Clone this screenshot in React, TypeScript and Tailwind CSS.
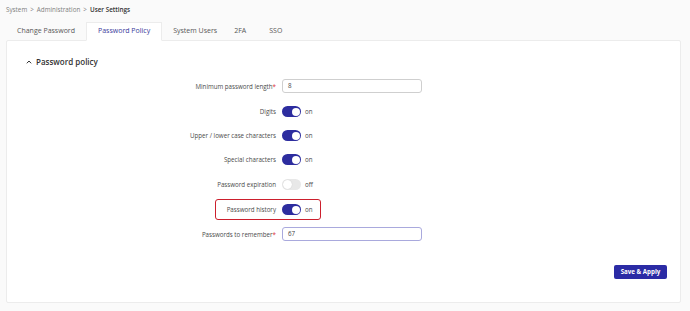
import React from "react";

function Toggle({ on }: { on: boolean }) {
  return on ? (
    <div className="w-[19px] h-[11px] rounded-full bg-[#2d2d9f] relative shrink-0">
      <div className="absolute right-[1.5px] top-[1.5px] w-[8px] h-[8px] rounded-full bg-white" />
    </div>
  ) : (
    <div className="w-[19px] h-[11px] rounded-full bg-[#e8e8e8] relative shrink-0">
      <div className="absolute left-[1px] top-[1px] w-[9px] h-[9px] rounded-full bg-white shadow-[0_0_1px_rgba(0,0,0,0.2)]" />
    </div>
  );
}

function Row({
  label,
  required,
  h,
  children,
  highlight,
}: {
  label: string;
  required?: boolean;
  h: string;
  children: React.ReactNode;
  highlight?: boolean;
}) {
  return (
    <div className={`flex items-center ${h} relative`}>
      <div className="w-[270px] text-right text-[6.2px] leading-[9px] text-[#4a4a4a] pr-[1px]">
        {label}
        {required && <span className="text-[#d33]">*</span>}
      </div>
      <div className="ml-[5px] flex items-center">{children}</div>
      {highlight && (
        <div className="absolute left-[208px] top-[2px] w-[106px] h-[21px] border-[1.5px] border-[#cc1f2d] rounded-[3px]" />
      )}
    </div>
  );
}

function Switch({ on }: { on: boolean }) {
  return (
    <div className="flex items-center">
      <Toggle on={on} />
      <span className="ml-[4px] text-[6.2px] text-[#4a4a4a]">{on ? "on" : "off"}</span>
    </div>
  );
}

export default function App() {
  return (
    <div className="w-[690px] h-[311px] bg-[#fafafa] overflow-hidden font-['Open_Sans',sans-serif] text-[#333]">
      <div className="h-[22px] pl-[6px] pt-[6px] text-[6.3px] leading-[8px] text-[#808080] flex items-start">
        <span>System</span>
        <span className="mx-[3px]">&gt;</span>
        <span>Administration</span>
        <span className="mx-[3px]">&gt;</span>
        <span className="text-[#333] font-semibold">User Settings</span>
      </div>
      <div className="h-[18px] pl-[6px] flex items-end text-[7px] text-[#585858]">
        <div className="h-[18px] px-[11px] flex items-center">Change Password</div>
        <div className="h-[19px] -mb-[1px] px-[11px] flex items-center bg-white border border-[#ececec] border-b-white text-[#3a3a9c] relative z-10">
          Password Policy
        </div>
        <div className="h-[18px] px-[11px] flex items-center">System Users</div>
        <div className="h-[18px] pl-[6px] pr-[10px] flex items-center">2FA</div>
        <div className="h-[18px] pl-[13px] pr-[9px] flex items-center">SSO</div>
      </div>
      <div className="ml-[6px] w-[675px] h-[263px] bg-white border border-[#ececec] rounded-[2px]">
        <div className="pt-[15px] pl-[19px] flex items-center h-[27px] text-[8px] font-semibold text-[#333]">
          <svg width="6" height="4" viewBox="0 0 6 4" className="mr-[4px]">
            <path d="M0.8 3.3 L3 1 L5.2 3.3" fill="none" stroke="#333" strokeWidth="1" />
          </svg>
          Password policy
        </div>
        <div className="mt-[5px]">
          <Row label="Minimum password length" required h="h-[26px]">
            <div className="w-[140px] h-[14px] border border-[#cfcfcf] rounded-[3px] flex items-center pl-[5px] text-[6.2px] text-[#444]">
              8
            </div>
          </Row>
          <Row label="Digits" h="h-[25px]">
            <Switch on />
          </Row>
          <Row label="Upper / lower case characters" h="h-[23px]">
            <Switch on />
          </Row>
          <Row label="Special characters" h="h-[25px]">
            <Switch on />
          </Row>
          <Row label="Password expiration" h="h-[25px]">
            <Switch on={false} />
          </Row>
          <Row label="Password history" h="h-[25px]" highlight>
            <Switch on />
          </Row>
          <Row label="Passwords to remember" required h="h-[24px]">
            <div className="w-[140px] h-[14px] border border-[#a9a9dd] rounded-[3px] flex items-center pl-[5px] text-[6.2px] text-[#444]">
              67
            </div>
          </Row>
        </div>
        <div className="flex justify-end pr-[13px] mt-[19px]">
          <div className="w-[53px] h-[14px] bg-[#2b2ba5] rounded-[2px] flex items-center justify-center text-white text-[6.2px] font-bold">
            Save &amp; Apply
          </div>
        </div>
      </div>
    </div>
  );
}
